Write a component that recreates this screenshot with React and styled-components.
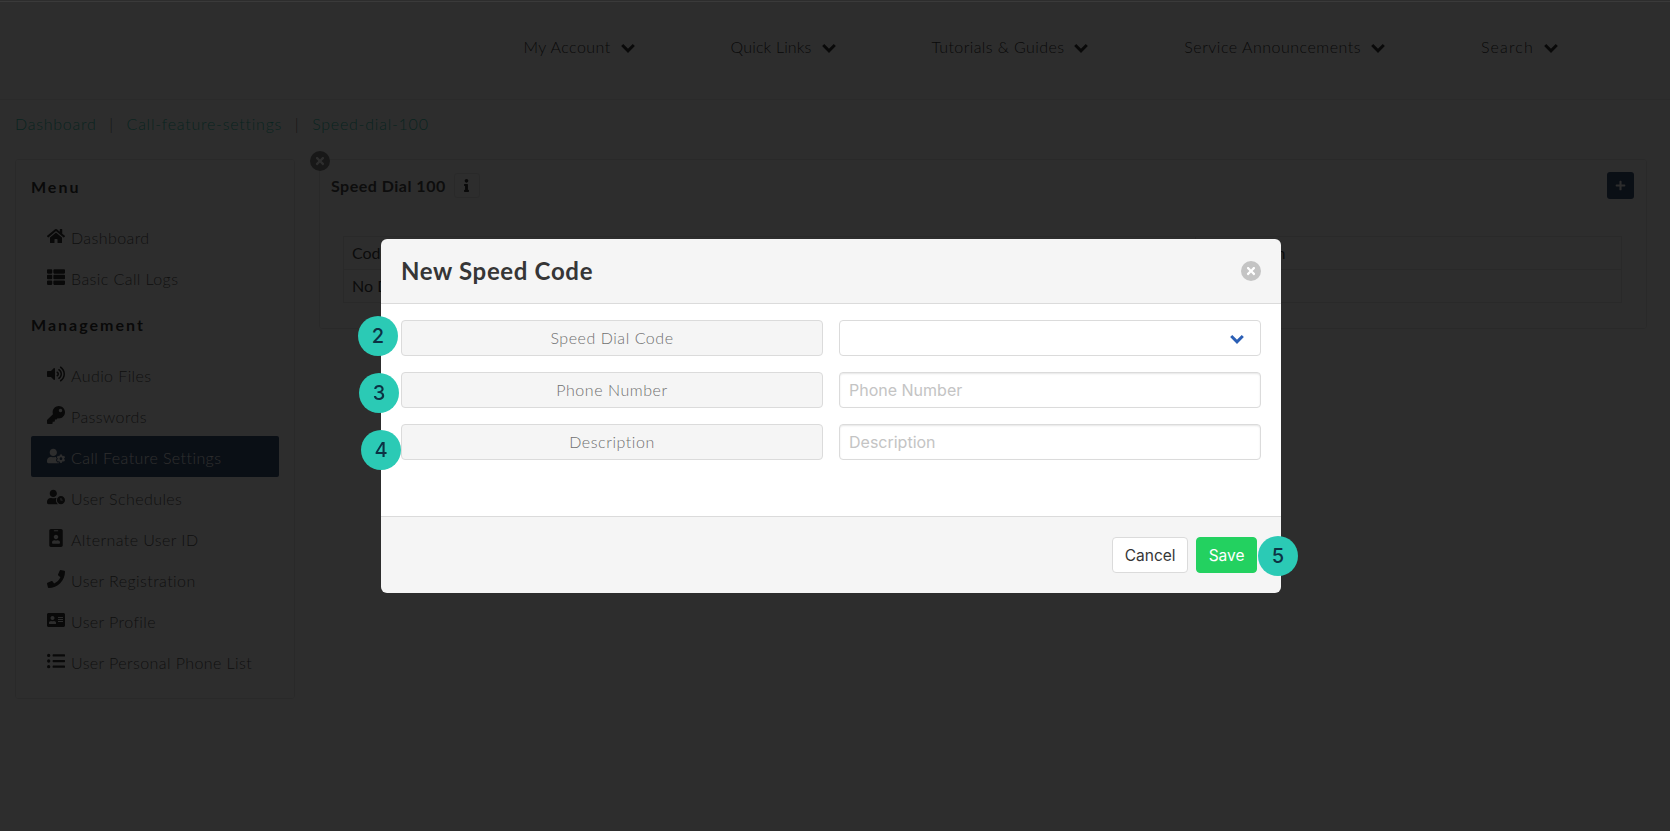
import React from 'react';
import styled, { createGlobalStyle } from 'styled-components';
import {
  FaHome, FaThList, FaVolumeUp, FaKey, FaUserCog, FaUserClock, FaIdBadge,
  FaPhone, FaAddressCard, FaListUl, FaInfo, FaPlus, FaTimes,
} from 'react-icons/fa';

const Global = createGlobalStyle`
  html, body { margin: 0; padding: 0; background: #fff; overflow: hidden; }
  body { font-family: "Lato", "Liberation Sans", sans-serif; font-size: 16px; color: #4a4a4a; }
  * { box-sizing: border-box; }
`;

const Page = styled.div`
  height: 831px;
  display: flex;
  flex-direction: column;
`;
const Navbar = styled.nav`
  height: 100px;
  flex: none;
  display: flex;
  align-items: center;
  justify-content: flex-end;
  gap: 96px;
  padding: 0 112px 6px 0;
  border-bottom: 1px solid #e6e6e6;
`;
const NavItem = styled.a`
  display: flex;
  align-items: center;
  gap: 10px;
  font-weight: 300;
  font-size: 16px;
  letter-spacing: ${p => p.$track}px;
  color: #000;
`;
const ChevronSvg = styled.svg`
  width: 14px;
  height: 10px;
  flex: none;
  margin-top: 2px;
  fill: none;
  stroke: currentColor;
  stroke-width: 3;
`;
const Crumbs = styled.div`
  height: 59px;
  flex: none;
  display: flex;
  align-items: center;
  padding: 0 0 12px 15px;
  font-weight: 300;
  letter-spacing: 0.75px;
  color: #00b89c;
`;
const Sep = styled.span`
  width: 30px;
  text-align: center;
  color: #555;
`;
const Columns = styled.div`
  display: flex;
  align-items: flex-start;
  gap: 24px;
  padding: 0 23px 0 15px;
`;
const Sidebar = styled.aside`
  width: 280px;
  flex: none;
  padding: 15px 15px 16px 15px;
  border: 1px solid #e4e4e4;
  border-radius: 3px;
`;
const MenuLabel = styled.div`
  height: 24px;
  line-height: 24px;
  font-weight: 700;
  font-size: 16px;
  letter-spacing: 2px;
  color: #000;
  margin: ${p => (p.$first ? '0 0 17px' : '15px 0 17px')};
`;
const MenuItem = styled.a`
  height: 41px;
  display: flex;
  align-items: center;
  gap: 5px;
  padding: 2px 0 0 15px;
  border-radius: 2px;
  font-weight: 300;
  letter-spacing: 0.42px;
  color: ${p => (p.$active ? '#fff' : '#333')};
  background: ${p => (p.$active ? '#0b2a58' : 'transparent')};
`;
const MenuIcon = styled.span`
  width: 20px;
  height: 20px;
  flex: none;
  display: flex;
  align-items: center;
  justify-content: center;
  margin-top: -3px;
  color: ${p => (p.$active ? '#fff' : '#000')};
  svg { width: 18px; height: 18px; }
`;
const Panel = styled.section`
  position: relative;
  flex: 1;
  padding: 12px 12px 25px 11px;
  border: 1px solid #e4e4e4;
  border-radius: 3px;
`;
const PageClose = styled.span`
  position: absolute;
  left: -10px;
  top: -9px;
  width: 20px;
  height: 20px;
  border-radius: 50%;
  background: #6a6a6a;
  color: #fff;
  display: flex;
  align-items: center;
  justify-content: center;
  svg { width: 12px; height: 12px; }
`;
const PanelHead = styled.div`
  display: flex;
  align-items: center;
  height: 27px;
  margin-bottom: 37px;
`;
const PanelTitle = styled.h2`
  margin: 0 8px 0 0;
  font-size: 16px;
  font-weight: 700;
  letter-spacing: 0.5px;
  color: #222;
`;
const InfoBox = styled.span`
  width: 26px;
  height: 25px;
  border: 1px solid #e0e0e0;
  border-radius: 3px;
  display: flex;
  align-items: center;
  justify-content: center;
  color: #000;
  svg { width: 11px; height: 13px; }
`;
const AddButton = styled.span`
  margin-left: auto;
  width: 27px;
  height: 27px;
  border-radius: 3px;
  background: #0b2a58;
  color: #fff;
  display: flex;
  align-items: center;
  justify-content: center;
  svg { width: 11px; height: 11px; }
`;
const Table = styled.table`
  width: calc(100% - 24px);
  margin-left: 12px;
  border-collapse: collapse;
  table-layout: fixed;
  font-size: 16px;
  color: #111;
  td, th {
    height: 33px;
    padding: 0 8px 2px;
    border: 1px solid #e4e4e4;
    font-weight: 400;
    text-align: left;
  }
`;
const CodeCol = styled.col`
  width: 852px;
`;

const Overlay = styled.div`
  position: fixed;
  inset: 0;
  padding-right: 8px;
  display: flex;
  align-items: center;
  justify-content: center;
  background: rgba(10, 10, 10, 0.86);
  &::before {
    content: '';
    position: absolute;
    left: 0;
    right: 0;
    top: 1px;
    height: 1px;
    background: #3a3a3a;
  }
`;
const Modal = styled.div`
  position: relative;
  width: 900px;
  height: 354px;
  border-radius: 6px;
  display: flex;
  flex-direction: column;
`;
const ModalHead = styled.header`
  height: 65px;
  flex: none;
  display: flex;
  align-items: center;
  justify-content: space-between;
  padding: 0 20px;
  background: #f5f5f5;
  border-bottom: 1px solid #dbdbdb;
  border-radius: 6px 6px 0 0;
`;
const ModalTitle = styled.h1`
  margin: 0;
  font-size: 24px;
  font-weight: 700;
  letter-spacing: 0.66px;
  color: #363636;
`;
const ModalClose = styled.span`
  width: 20px;
  height: 20px;
  border-radius: 50%;
  background: #c4c4c4;
  color: #fff;
  display: flex;
  align-items: center;
  justify-content: center;
  svg { width: 12px; height: 12px; }
`;
const ModalBody = styled.div`
  flex: 1;
  background: #fff;
  padding: 16px 20px 0;
  display: grid;
  grid-template-columns: 422px 422px;
  grid-auto-rows: 36px;
  gap: 16px;
`;
const FieldLabel = styled.div`
  display: flex;
  align-items: center;
  justify-content: center;
  background: #f5f5f5;
  border: 1px solid #dbdbdb;
  border-radius: 4px;
  font-weight: 300;
  font-size: 16px;
  letter-spacing: 0.55px;
  color: #6f6f6f;
`;
const FieldInput = styled.input`
  width: 100%;
  height: 36px;
  padding: 0 9px;
  background: #fff;
  border: 1px solid #dbdbdb;
  border-radius: 4px;
  box-shadow: inset 0 1px 2px rgba(10, 10, 10, 0.1);
  font-family: "Inter", sans-serif;
  font-size: 16px;
  outline: none;
  &::placeholder { color: #c4c4c4; opacity: 1; }
`;
const SelectBox = styled.div`
  height: 36px;
  display: flex;
  align-items: center;
  justify-content: flex-end;
  padding-right: 16px;
  border: 1px solid #dbdbdb;
  border-radius: 4px;
  color: #2b5fb5;
`;
const ModalFoot = styled.footer`
  height: 77px;
  flex: none;
  display: flex;
  align-items: center;
  justify-content: flex-end;
  gap: 8px;
  padding: 0 24px 0 0;
  background: #f5f5f5;
  border-top: 1px solid #dbdbdb;
  border-radius: 0 0 6px 6px;
`;
const Button = styled.button`
  height: 36px;
  padding: 1px 11.5px 0;
  border: 1px solid ${p => (p.$primary ? '#23d160' : '#dbdbdb')};
  border-radius: 4px;
  background: ${p => (p.$primary ? '#23d160' : '#fff')};
  color: ${p => (p.$primary ? '#fff' : '#363636')};
  font-family: "Inter", sans-serif;
  font-size: 15.5px;
`;
const Badge = styled.span`
  position: absolute;
  left: ${p => p.$x}px;
  top: ${p => p.$y}px;
  width: 40px;
  height: 40px;
  border-radius: 50%;
  background: #2bcab5;
  color: #0c3244;
  display: flex;
  align-items: center;
  justify-content: center;
  font-family: "Inter", sans-serif;
  font-size: 20px;
  font-weight: 500;
`;

const Chevron = () => (
  <ChevronSvg viewBox="0 0 14 10"><path d="M1.2 2 L7 7.8 L12.8 2" /></ChevronSvg>
);

const navLinks = [
  ['My Account', 0.45],
  ['Quick Links', 0.15],
  ['Tutorials & Guides', 0.4],
  ['Service Announcements', 0.5],
  ['Search', 1.15],
];
const topMenu = [
  ['Dashboard', FaHome],
  ['Basic Call Logs', FaThList],
];
const mgmtMenu = [
  ['Audio Files', FaVolumeUp],
  ['Passwords', FaKey],
  ['Call Feature Settings', FaUserCog, true],
  ['User Schedules', FaUserClock],
  ['Alternate User ID', FaIdBadge],
  ['User Registration', FaPhone],
  ['User Profile', FaAddressCard],
  ['User Personal Phone List', FaListUl],
];
const fields = ['Phone Number', 'Description'];

function Item({ label, Icon, active }) {
  return (
    <MenuItem $active={active}>
      <MenuIcon $active={active}><Icon /></MenuIcon>
      {label}
    </MenuItem>
  );
}

export default function App() {
  return (
    <>
      <Global />
      <Page>
        <Navbar>
          {navLinks.map(([l, t]) => (
            <NavItem key={l} $track={t}>{l}<Chevron /></NavItem>
          ))}
        </Navbar>
        <Crumbs>
          Dashboard<Sep>|</Sep>Call-feature-settings<Sep>|</Sep>Speed-dial-100
        </Crumbs>
        <Columns>
          <Sidebar>
            <MenuLabel $first>Menu</MenuLabel>
            {topMenu.map(([l, I]) => <Item key={l} label={l} Icon={I} />)}
            <MenuLabel>Management</MenuLabel>
            {mgmtMenu.map(([l, I, a]) => <Item key={l} label={l} Icon={I} active={a} />)}
          </Sidebar>
          <Panel>
            <PageClose><FaTimes /></PageClose>
            <PanelHead>
              <PanelTitle>Speed Dial 100</PanelTitle>
              <InfoBox><FaInfo /></InfoBox>
              <AddButton><FaPlus /></AddButton>
            </PanelHead>
            <Table>
              <colgroup><CodeCol /><col /></colgroup>
              <thead>
                <tr><th>Code</th><th>Description</th></tr>
              </thead>
              <tbody>
                <tr><td colSpan={2}>No Data</td></tr>
              </tbody>
            </Table>
          </Panel>
        </Columns>
      </Page>
      <Overlay>
        <Modal>
          <ModalHead>
            <ModalTitle>New Speed Code</ModalTitle>
            <ModalClose><FaTimes /></ModalClose>
          </ModalHead>
          <ModalBody>
            <FieldLabel>Speed Dial Code</FieldLabel>
            <SelectBox><Chevron /></SelectBox>
            {fields.map(f => (
              <React.Fragment key={f}>
                <FieldLabel>{f}</FieldLabel>
                <FieldInput placeholder={f} />
              </React.Fragment>
            ))}
          </ModalBody>
          <ModalFoot>
            <Button>Cancel</Button>
            <Button $primary>Save</Button>
          </ModalFoot>
          <Badge $x={-23} $y={77}>2</Badge>
          <Badge $x={-22} $y={134}>3</Badge>
          <Badge $x={-20} $y={191}>4</Badge>
          <Badge $x={877} $y={297}>5</Badge>
        </Modal>
      </Overlay>
    </>
  );
}
